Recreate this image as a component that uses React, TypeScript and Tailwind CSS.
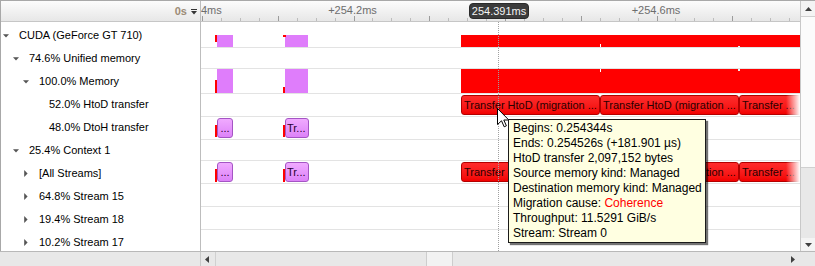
import React from "react";

type TreeRow = { level: 0 | 1 | 2 | 3; tri: "down" | "right" | null; text: string };

const treeRows: TreeRow[] = [
  { level: 0, tri: "down", text: "CUDA (GeForce GT 710)" },
  { level: 1, tri: "down", text: "74.6% Unified memory" },
  { level: 2, tri: "down", text: "100.0% Memory" },
  { level: 3, tri: null, text: "52.0% HtoD transfer" },
  { level: 3, tri: null, text: "48.0% DtoH transfer" },
  { level: 1, tri: "down", text: "25.4% Context 1" },
  { level: 2, tri: "right", text: "[All Streams]" },
  { level: 2, tri: "right", text: "64.8% Stream 15" },
  { level: 2, tri: "right", text: "19.4% Stream 18" },
  { level: 2, tri: "right", text: "10.2% Stream 17" },
];

const indent = ["pl-[0px]", "pl-[10px]", "pl-[20px]", "pl-[30px]"];

function Tri({ kind }: { kind: "down" | "right" | null }) {
  if (kind === "down")
    return (
      <svg width="6" height="4" viewBox="0 0 6 4" className="ml-[2px]">
        <polygon points="0,0.2 6,0.2 3,3.6" fill="#555555" />
      </svg>
    );
  if (kind === "right")
    return (
      <svg width="4" height="7" viewBox="0 0 4 7" className="ml-[3px]">
        <polygon points="0.2,0 3.6,3.5 0.2,7" fill="#555555" />
      </svg>
    );
  return null;
}

function RedBox({ pos, text }: { pos: string; text: string }) {
  return (
    <div
      className={
        "absolute top-[1px] h-[20px] rounded-[3px] border border-[#b30000] bg-gradient-to-b from-[#ff2b2b] to-[#f20000] pl-[2px] text-[11px] leading-[18px] text-[#2a0000] whitespace-nowrap overflow-hidden " +
        pos
      }
    >
      {text}
    </div>
  );
}

function PinkBox({ pos, text }: { pos: string; text: string }) {
  return (
    <div
      className={
        "absolute top-[1px] h-[20px] rounded-[3px] border border-[#a455c4] bg-gradient-to-b from-[#f0aaff] to-[#dd82f8] text-[11px] leading-[18px] text-[#2a0030] whitespace-nowrap overflow-hidden " +
        pos
      }
    >
      {text}
    </div>
  );
}

export default function App() {
  const ticks: React.ReactNode[] = [];
  for (let i = 0; 1 + i * 18.9375 < 599; i++) {
    const x = Math.round(1 + i * 18.9375);
    ticks.push(
      <div
        key={i}
        className={
          i % 4 === 0
            ? "absolute bottom-0 w-px h-[5px] bg-[#9c9c9c]"
            : "absolute bottom-0 w-px h-[3px] bg-[#bdbdbd]"
        }
        style={{ left: x }}
      />
    );
  }

  return (
    <div className="relative w-[815px] h-[266px] overflow-hidden bg-white text-black font-['Liberation_Sans',Arial,sans-serif] text-[11px]">
      <div className="flex h-[251px] border-t border-l border-[#a8a8a8]">
        {/* Left tree */}
        <div className="w-[200px] flex flex-col border-r border-[#bdbdbd]">
          <div className="h-[21px] shrink-0 border-b border-[#c6c6c6] bg-gradient-to-b from-[#fcfcfc] to-[#e7e7e7] flex items-center justify-end pr-[3px] gap-[4px]">
            <span className="font-bold text-[11px] leading-[13px] text-[#9c8b76]">0s</span>
            <svg width="6" height="6" viewBox="0 0 6 6" className="mt-[2px]">
              <rect x="0" y="0" width="6" height="1" fill="#333" />
              <polygon points="0,2 6,2 3,5.5" fill="#333" />
            </svg>
          </div>
          <div className="flex-1 overflow-hidden pt-[2px]">
            {treeRows.map((r, i) => (
              <div key={i} className={"h-[23px] flex items-center " + indent[r.level]}>
                <div className="w-[18px] h-full flex items-center">
                  <Tri kind={r.tri} />
                </div>
                <span className="whitespace-nowrap leading-[13px]">{r.text}</span>
              </div>
            ))}
          </div>
        </div>

        {/* Timeline */}
        <div className="flex-1 min-w-0 flex flex-col">
          <div className="relative h-[21px] shrink-0 border-b border-[#c6c6c6] bg-gradient-to-b from-[#fcfcfc] to-[#e7e7e7] overflow-hidden text-[#6d6d6d]">
            <span className="absolute top-[3px] left-[1px] -translate-x-1/2 leading-[13px] whitespace-nowrap">+254ms</span>
            <span className="absolute top-[3px] left-[151.5px] -translate-x-1/2 leading-[13px] whitespace-nowrap">+254.2ms</span>
            <span className="absolute top-[3px] left-[455px] -translate-x-1/2 leading-[13px] whitespace-nowrap">+254.6ms</span>
            {ticks}
          </div>

          {/* Row 1: CUDA */}
          <div className="relative h-[26px] shrink-0 border-b border-[#e3e3e3]">
            <div className="absolute left-[16px] top-[13px] w-[16px] h-[12px] bg-[#df7dfb]" />
            <div className="absolute left-[14px] top-[13px] w-[2px] h-[7px] bg-[#ff0000]" />
            <div className="absolute left-[84px] top-[13px] w-[23px] h-[12px] bg-[#df7dfb]" />
            <div className="absolute left-[82px] top-[13px] w-[3px] h-[2px] bg-[#ff0000]" />
            <div className="absolute left-[260px] top-[13px] w-[339px] h-[12px] bg-[#ff0000]" />
            <div className="absolute left-[399px] top-[22px] w-px h-[3px] bg-white" />
            <div className="absolute left-[537px] top-[24px] w-[2px] h-px bg-[#f0f0f0]" />
          </div>
          {/* Row 2: Unified memory */}
          <div className="relative h-[21px] shrink-0 border-b border-[#e3e3e3]" />
          {/* Row 3: Memory */}
          <div className="relative h-[25px] shrink-0 border-b border-[#e3e3e3]">
            <div className="absolute left-[16px] top-0 w-[16px] h-[24px] bg-[#df7dfb]" />
            <div className="absolute left-[14px] top-[11px] w-[2px] h-[13px] bg-[#ff0000]" />
            <div className="absolute left-[84px] top-0 w-[23px] h-[24px] bg-[#df7dfb]" />
            <div className="absolute left-[82px] top-[18px] w-[2px] h-[6px] bg-[#ff0000]" />
            <div className="absolute left-[260px] top-0 w-[339px] h-[24px] bg-[#ff0000]" />
            <div className="absolute left-[399px] top-0 w-px h-[3px] bg-white" />
            <div className="absolute left-[537px] top-0 w-[2px] h-[2px] bg-[#f0f0f0]" />
          </div>
          {/* Row 4: HtoD */}
          <div className="relative h-[23px] shrink-0 border-b border-[#e3e3e3] overflow-hidden">
            <RedBox pos="left-[260px] w-[139px]" text="Transfer HtoD (migration ..." />
            <RedBox pos="left-[399px] w-[139px]" text="Transfer HtoD (migration ..." />
            <RedBox pos="left-[538px] w-[70px]" text="Transfer ..." />
            <div className="absolute right-0 top-0 w-[14px] h-full bg-gradient-to-r from-transparent to-white" />
          </div>
          {/* Row 5: DtoH */}
          <div className="relative h-[23px] shrink-0 border-b border-[#e3e3e3]">
            <PinkBox pos="left-[16px] w-[16px] text-center" text="..." />
            <div className="absolute left-[14px] top-[8px] w-[2px] h-[12px] bg-[#ff0000]" />
            <PinkBox pos="left-[84px] w-[24px] pl-[1px]" text="Tr..." />
            <div className="absolute left-[82px] top-[8px] w-[2px] h-[12px] bg-[#ff0000]" />
          </div>
          {/* Row 6: Context 1 */}
          <div className="relative h-[21px] shrink-0 border-b border-[#e3e3e3]" />
          {/* Row 7: All Streams */}
          <div className="relative h-[23px] shrink-0 border-b border-[#e3e3e3] overflow-hidden">
            <PinkBox pos="left-[16px] w-[16px] text-center" text="..." />
            <div className="absolute left-[14px] top-[8px] w-[2px] h-[13px] bg-[#ff0000]" />
            <PinkBox pos="left-[84px] w-[24px] pl-[1px]" text="Tr..." />
            <div className="absolute left-[82px] top-[8px] w-[2px] h-[13px] bg-[#ff0000]" />
            <RedBox pos="left-[260px] w-[139px]" text="Transfer HtoD (migration ..." />
            <RedBox pos="left-[399px] w-[139px]" text="Transfer HtoD (migration ..." />
            <RedBox pos="left-[538px] w-[70px]" text="Transfer ..." />
            <div className="absolute right-0 top-0 w-[14px] h-full bg-gradient-to-r from-transparent to-white" />
          </div>
          <div className="relative h-[23px] shrink-0 border-b border-[#e3e3e3]" />
          <div className="relative h-[23px] shrink-0 border-b border-[#e3e3e3]" />
          <div className="relative flex-1" />
        </div>

        {/* Vertical scrollbar */}
        <div className="w-[15px] flex flex-col border-l border-[#c8c8c8] bg-[#e8e8e8]">
          <div className="h-[15px] shrink-0 bg-[#f4f4f4] flex items-center justify-center">
            <svg width="7" height="4" viewBox="0 0 7 4">
              <polygon points="0,4 7,4 3.5,0" fill="#404040" />
            </svg>
          </div>
          <div className="h-[152px] shrink-0 bg-[#fbfbfb] border-y border-[#d0d0d0]" />
          <div className="flex-1" />
          <div className="h-[13px] shrink-0 bg-[#f4f4f4] flex items-center justify-center">
            <svg width="7" height="4" viewBox="0 0 7 4">
              <polygon points="0,0 7,0 3.5,4" fill="#404040" />
            </svg>
          </div>
        </div>
      </div>

      {/* Horizontal scrollbar */}
      <div className="flex h-[15px] border-t border-[#b8b8b8] bg-[#e8e8e8]">
        <div className="w-[201px] shrink-0 border-r border-[#c8c8c8]" />
        <div className="w-[15px] shrink-0 border-r border-[#d0d0d0] flex items-center pl-[4px]">
          <svg width="4" height="7" viewBox="0 0 4 7">
            <polygon points="4,0 4,7 0,3.5" fill="#404040" />
          </svg>
        </div>
        <div className="w-[210px] shrink-0" />
        <div className="w-[27px] shrink-0 bg-[#f2f2f2] border-x border-[#cdcdcd]" />
        <div className="flex-1" />
        <div className="w-[14px] shrink-0 flex items-center pl-[5px]">
          <svg width="4" height="7" viewBox="0 0 4 7">
            <polygon points="0,0 4,3.5 0,7" fill="#404040" />
          </svg>
        </div>
        <div className="w-[15px] shrink-0" />
      </div>

      {/* Overlays */}
      <div className="absolute left-[498px] top-[22px] h-[229px] w-0 border-l border-dotted border-[#a0a0a0]" />

      <div className="absolute left-[469px] top-[3px] w-[60px] h-[16px] rounded-[4px] bg-[#3c3c3c] border border-[#2a2a2a] text-[#f4f4f4] text-[11px] leading-[14px] text-center whitespace-nowrap">
        254.391ms
      </div>

      <svg className="absolute left-[497px] top-[108px]" width="13" height="20" viewBox="0 0 13 20">
        <path
          d="M0.5 0.5 L0.5 16.5 L4.5 12.8 L7.2 18.8 L9.4 17.8 L6.8 12 L11.8 12 Z"
          fill="#ffffff"
          stroke="#000000"
          strokeWidth="1"
          strokeLinejoin="miter"
        />
      </svg>

      <div className="absolute left-[508px] top-[119px] w-[198px] h-[124px] border border-[#1a1a1a] bg-[#ffffe1] shadow-[2px_2px_1px_rgba(0,0,0,0.55)] pl-[4px] pt-[1px] text-[12px] leading-[15px] text-black whitespace-nowrap">
        <div>Begins: 0.254344s</div>
        <div>Ends: 0.254526s (+181.901 µs)</div>
        <div>HtoD transfer 2,097,152 bytes</div>
        <div>Source memory kind: Managed</div>
        <div>Destination memory kind: Managed</div>
        <div>
          Migration cause: <span className="text-[#ff0000]">Coherence</span>
        </div>
        <div>Throughput: 11.5291 GiB/s</div>
        <div>Stream: Stream 0</div>
      </div>
    </div>
  );
}
